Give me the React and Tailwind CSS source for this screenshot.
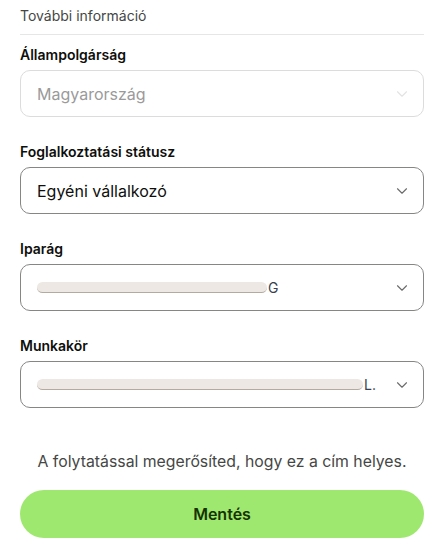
import { ChevronDown } from "lucide-react";

function Field({ label, children, disabled }) {
  return (
    <div>
      <div className="text-[14px] font-semibold leading-[20px] text-[#0e0f0c]">{label}</div>
      <div
        className={
          "mt-[5px] flex h-[47px] items-center justify-between rounded-[10px] border pl-[16px] pr-[12px] text-[16px] " +
          (disabled ? "border-[#dcdcdc] text-[#9a9a9a]" : "border-[#868685] text-[#0e0f0c]")
        }
      >
        <div className="flex min-w-0 items-center">{children}</div>
        <ChevronDown
          size={18}
          strokeWidth={1.5}
          className={disabled ? "text-[#e3e3e3]" : "text-[#6a6c6a]"}
        />
      </div>
    </div>
  );
}

function Redacted({ width, tail }) {
  return (
    <span className="flex items-center">
      <span
        className="block h-[11px] rounded-full border-b border-[#b5aaa0] bg-[#ede8e3]"
        style={{ width }}
      />
      <span className="ml-[1px] text-[14px] text-[#3a3f4f]">{tail}</span>
    </span>
  );
}

export default function App() {
  return (
    <div
      className="min-h-[557px] bg-white px-[20px] pt-[6px]"
      style={{ fontFamily: "Inter, 'Noto Sans', sans-serif" }}
    >
      <div className="pb-[8px] text-[14px] leading-[20px] text-[#454745]">További információ</div>
      <div className="h-px bg-[#e6e6e6]" />

      <div className="mt-[10px] flex flex-col gap-[25px]">
        <Field label="Állampolgárság" disabled>
          Magyarország
        </Field>
        <Field label="Foglalkoztatási státusz">Egyéni vállalkozó</Field>
        <Field label="Iparág">
          <Redacted width={230} tail="G" />
        </Field>
        <Field label="Munkakör">
          <Redacted width={326} tail="L." />
        </Field>
      </div>

      <p className="mt-[42px] text-center text-[15.8px] leading-[24px] text-[#454745]">
        A folytatással megerősíted, hogy ez a cím helyes.
      </p>

      <button className="mt-[16px] h-[48px] w-full rounded-full bg-[#9fe870] text-[16px] font-semibold text-[#163300]">
        Mentés
      </button>
    </div>
  );
}
